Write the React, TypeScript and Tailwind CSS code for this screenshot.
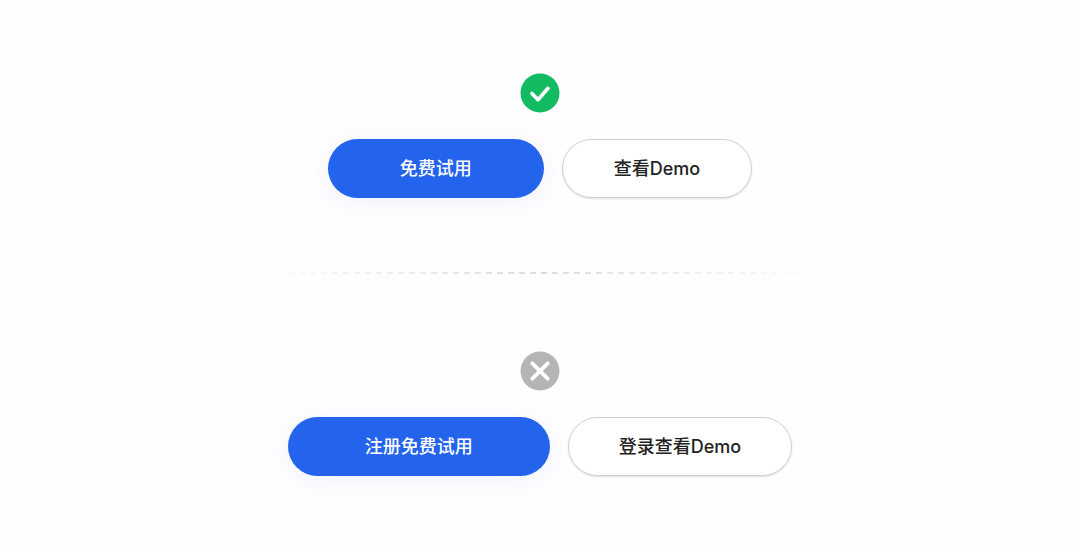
import type { ReactNode } from 'react';
import clsx from 'clsx';

function CheckBadge() {
  return (
    <svg viewBox="0 0 40 40" className="size-10" role="img" aria-label="推荐">
      <circle cx="20" cy="20" r="19.5" fill="#13bb62" />
      <path
        d="M12 20.4l6 6.3 10-11.4"
        fill="none"
        stroke="#fff"
        strokeWidth="3.6"
        strokeLinecap="round"
        strokeLinejoin="round"
      />
    </svg>
  );
}

function CrossBadge() {
  return (
    <svg viewBox="0 0 40 40" className="size-10" role="img" aria-label="不推荐">
      <circle cx="20" cy="20" r="19.5" fill="#b5b5b5" />
      <path
        d="M12.3 12.3l15.4 15.4M27.7 12.3L12.3 27.7"
        fill="none"
        stroke="#fff"
        strokeWidth="3.8"
        strokeLinecap="round"
      />
    </svg>
  );
}

interface ExampleProps {
  badge: ReactNode;
  primary: string;
  secondary: string;
  wide?: boolean;
}

function Example({ badge, primary, secondary, wide }: ExampleProps) {
  return (
    <section className="flex flex-col items-center gap-[26px] pt-[73px] pb-[74px]">
      {badge}
      <div className="flex flex-wrap justify-center gap-[18px]">
        <button
          type="button"
          className={clsx(
            'h-[59px] rounded-full bg-[#2463eb] text-white shadow-[0_4px_20px_rgba(80,80,255,0.08)]',
            wide ? 'px-[77px]' : 'px-[72px]'
          )}
        >
          {primary}
        </button>
        <button
          type="button"
          className={clsx(
            'h-[59px] rounded-full border border-[#d0d0d0] bg-white text-[#222] shadow-[0_1px_2px_rgba(0,0,0,0.12)]',
            wide ? 'px-[50px]' : 'px-[51px]'
          )}
        >
          {secondary}
        </button>
      </div>
    </section>
  );
}

export default function App() {
  return (
    <main className="min-h-screen bg-[#fefefe] font-['Inter','Noto_Sans_CJK_SC',sans-serif] text-lg font-medium">
      <Example badge={<CheckBadge />} primary="免费试用" secondary="查看Demo" />
      <div className="mx-auto mb-1 h-0.5 w-full max-w-[570px] bg-[repeating-linear-gradient(90deg,#dcdcdc_0_6px,transparent_6px_11px)] mask-[linear-gradient(90deg,transparent,#000_50%,transparent)]" />
      <Example badge={<CrossBadge />} primary="注册免费试用" secondary="登录查看Demo" wide />
    </main>
  );
}
